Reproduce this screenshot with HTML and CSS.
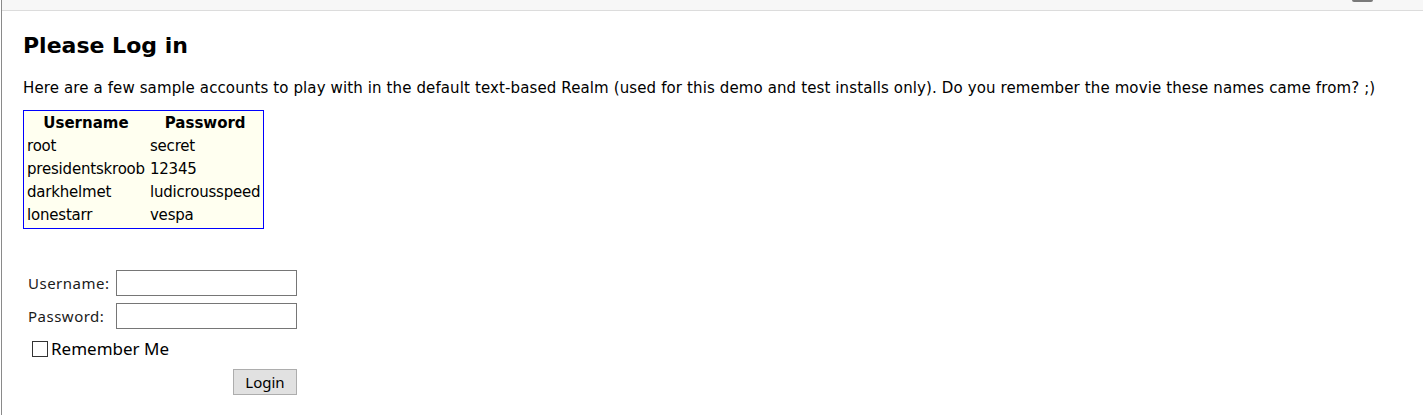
FILE: index.html
```html
<!DOCTYPE html>
<html>
<head>
<meta charset="utf-8">
<link rel="stylesheet" href="styles.css">
</head>
<body>
<div class="topbar"><span class="thumb"></span></div>
<div class="page">
  <h1 class="title">Please Log in</h1>
  <p class="intro">Here are a few sample accounts to play with in the default text-based Realm (used for this demo and test installs only). Do you remember the movie these names came from? ;)</p>
  <table class="accounts">
    <tr><th>Username</th><th>Password</th></tr>
    <tr><td>root</td><td>secret</td></tr>
    <tr><td>presidentskroob</td><td>12345</td></tr>
    <tr><td>darkhelmet</td><td>ludicrousspeed</td></tr>
    <tr><td>lonestarr</td><td>vespa</td></tr>
  </table>
  <form class="login">
    <div class="field"><label class="lbl">Username:</label><input class="inp" type="text"></div>
    <div class="field"><label class="lbl">Password:</label><input class="inp" type="password"></div>
    <div class="remember"><span class="box"></span><span class="rtext">Remember Me</span></div>
    <div class="actions"><button class="btn" type="button">Login</button></div>
  </form>
</div>
</body>
</html>
```
FILE: styles.css
```css
html, body {
  margin: 0;
  padding: 0;
  background: #fff;
  color: #000;
  font-family: "DejaVu Sans", Verdana, sans-serif;
}
body {
  border-left: 1px solid #8a8a8a;
  margin-left: 1px;
  min-height: 415px;
  box-sizing: border-box;
}
.topbar {
  height: 10px;
  background: #f7f7f7;
  border-bottom: 1px solid #dcdcdc;
  position: relative;
}
.thumb {
  position: absolute;
  left: 1350px;
  top: 0;
  width: 21px;
  height: 2px;
  background: #7a7a7a;
  border-radius: 0 0 2px 2px;
}
.page {
  padding-left: 21px;
}
.title {
  margin: 0;
  padding-top: 21px;
  font-size: 22px;
  font-weight: bold;
  line-height: 28px;
}
.intro {
  margin: 18px 0 0;
  font-size: 15px;
  line-height: 20px;
  letter-spacing: 0.12px;
}
.accounts {
  margin-top: 12px;
  border: 1px solid #0000ff;
  background: #fffff0;
  border-collapse: separate;
  border-spacing: 1px 2px;
  font-size: 15px;
}
.accounts th, .accounts td {
  padding: 0 2px;
  height: 21px;
  line-height: 21px;
  white-space: nowrap;
}
.accounts th {
  text-align: center;
  font-weight: bold;
}
.accounts td {
  text-align: left;
  letter-spacing: -0.2px;
}
.login {
  margin-top: 41px;
  padding-left: 5px;
  width: 269px;
  font-family: "Noto Sans", sans-serif;
}
.field {
  display: flex;
  align-items: center;
  margin-bottom: 7px;
}
.lbl {
  width: 89px;
  font-size: 15px;
  letter-spacing: 0.5px;
  color: #1a1a1a;
}
.inp {
  width: 181px;
  height: 26px;
  box-sizing: border-box;
  border: 1px solid #767676;
  margin: 0;
  padding: 0 2px;
  background: #fff;
}
.remember {
  display: flex;
  align-items: center;
  padding-left: 4px;
  margin-top: 8px;
}
.box {
  width: 16px;
  height: 16px;
  box-sizing: border-box;
  border: 1px solid #333;
  background: #fff;
  margin-right: 3px;
}
.rtext {
  font-size: 17px;
}
.actions {
  display: flex;
  justify-content: flex-end;
  margin-top: 9px;
}
.btn {
  width: 64px;
  height: 26px;
  background: #e1e1e1;
  border: 1px solid #adadad;
  font-family: "Noto Sans", sans-serif;
  font-size: 15px;
  padding: 0;
  color: #000;
}
```
